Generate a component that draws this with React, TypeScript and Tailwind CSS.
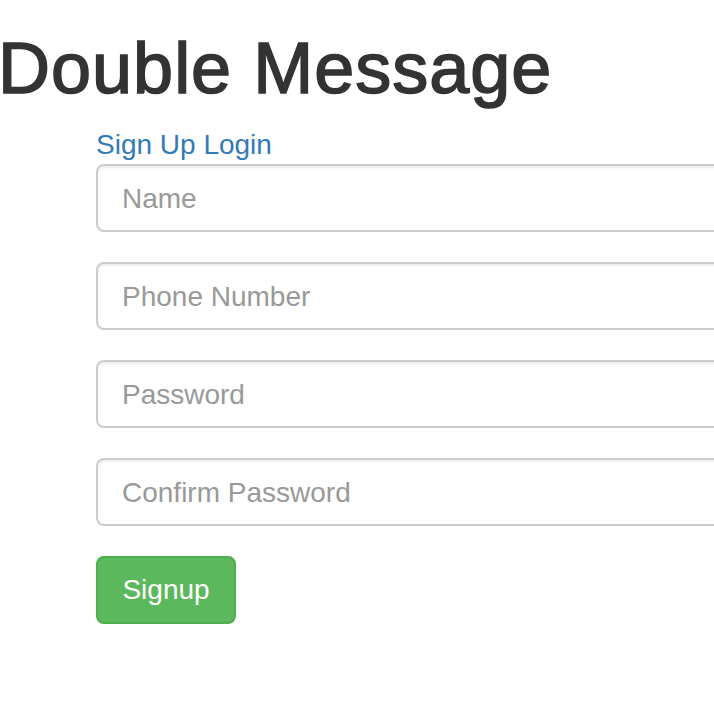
import { useState } from 'react';

export default function App() {
  const [form, setForm] = useState({ name: '', phone: '', password: '', confirm: '' });

  const fields: { key: keyof typeof form; placeholder: string; type: string }[] = [
    { key: 'name', placeholder: 'Name', type: 'text' },
    { key: 'phone', placeholder: 'Phone Number', type: 'tel' },
    { key: 'password', placeholder: 'Password', type: 'password' },
    { key: 'confirm', placeholder: 'Confirm Password', type: 'password' },
  ];

  return (
    <div className="min-h-screen overflow-hidden bg-white font-['Liberation_Sans',Arial,sans-serif] text-[#333]">
      <h1 className="mt-[29px] mb-[15px] -ml-[2px] text-[72px] leading-[79px] font-medium tracking-[1px] whitespace-nowrap [-webkit-text-stroke:1.6px_#333]">
        Double Message
      </h1>

      <div className="pl-[96px]">
        <a href="#" className="block pt-[2px] text-[28px] leading-[39px] text-[#337ab7] whitespace-nowrap">
          Sign Up Login
        </a>

        <form className="w-[700px]" onSubmit={(e) => e.preventDefault()}>
          {fields.map((f) => (
            <div key={f.key} className="mb-[30px]">
              <input
                type={f.type}
                value={form[f.key]}
                onChange={(e) => setForm({ ...form, [f.key]: e.target.value })}
                placeholder={f.placeholder}
                className="block h-[68px] w-full rounded-[8px] border-2 border-[#ccc] bg-white px-[24px] pt-[2px] text-[28px] text-[#555] shadow-[inset_0_2px_2px_rgba(0,0,0,0.075)] outline-none placeholder:text-[#999]"
              />
            </div>
          ))}

          <button
            type="submit"
            className="h-[68px] w-[140px] rounded-[8px] border-2 border-[#4cae4c] bg-[#5cb85c] text-[28px] text-white"
          >
            Signup
          </button>
        </form>
      </div>
    </div>
  );
}
